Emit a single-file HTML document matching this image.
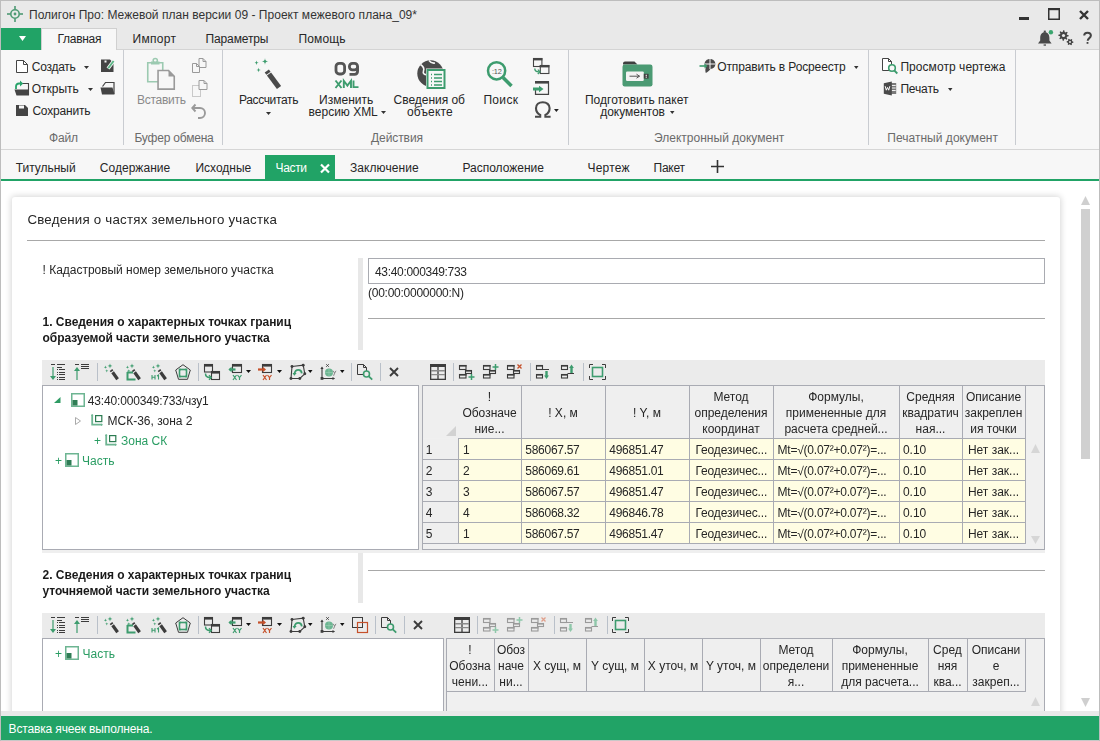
<!DOCTYPE html>
<html><head><meta charset="utf-8"><style>
html,body{margin:0;padding:0;}
body{width:1100px;height:741px;overflow:hidden;position:relative;background:#fff;font-family:"Liberation Sans", sans-serif;}
.t{position:absolute;white-space:nowrap;line-height:1;}
.r{position:absolute;}
svg.r{overflow:visible;}
</style></head><body>

<div class="r" style="left:0px;top:0px;width:1100px;height:49px;background:#e9e9e9;"></div>
<div class="r" style="left:0px;top:49px;width:1100px;height:100px;background:#f7f7f7;"></div>
<div class="r" style="left:0px;top:149px;width:1100px;height:1px;background:#d6d6d6;"></div>
<div class="r" style="left:0px;top:150px;width:1100px;height:29px;background:#f7f7f7;"></div>
<div class="r" style="left:0px;top:179px;width:1100px;height:2px;background:#21a366;"></div>
<div class="r" style="left:0px;top:181px;width:1100px;height:530px;background:#ffffff;"></div>
<div class="r" style="left:0px;top:0px;width:1px;height:741px;background:#bdbdbd;"></div>
<div class="r" style="left:1099px;top:0px;width:1px;height:741px;background:#bdbdbd;"></div>
<div class="r" style="left:0px;top:0px;width:1100px;height:1px;background:#bdbdbd;"></div>
<div class="t" style="left:29px;top:8.84px;font-size:12px;color:#333;letter-spacing:0.024px;">Полигон Про: Межевой план версии 09 - Проект межевого плана_09*</div>
<svg class="r" style="left:7px;top:6px;" width="16" height="16" viewBox="0 0 16 16"><circle cx="8" cy="8" r="4.2" fill="none" stroke="#4f9a74" stroke-width="1.6"/><circle cx="8" cy="8" r="1.4" fill="#4f9a74"/><rect x="7.2" y="0" width="1.6" height="3.6" fill="#4f9a74"/><rect x="7.2" y="12.4" width="1.6" height="3.6" fill="#4f9a74"/><rect x="0" y="7.2" width="3.6" height="1.6" fill="#4f9a74"/><rect x="12.4" y="7.2" width="3.6" height="1.6" fill="#4f9a74"/></svg>
<div class="r" style="left:1019px;top:17px;width:10px;height:3px;background:#333;"></div>
<svg class="r" style="left:1048px;top:8px;" width="12" height="12" viewBox="0 0 12 12"><rect x="0.75" y="1" width="10.5" height="10.25" fill="none" stroke="#333" stroke-width="1.5"/><rect x="0" y="0" width="12" height="2.2" fill="#333"/></svg>
<svg class="r" style="left:1079px;top:10px;" width="10" height="10" viewBox="0 0 10 10"><path d="M1 1L9 9M9 1L1 9" stroke="#333" stroke-width="2.4"/></svg>
<svg class="r" style="left:1037px;top:30px;" width="16" height="16" viewBox="0 0 16 16"><path d="M7.8 2.2c-3.2 0-4.6 2.6-4.6 5.6v2.6L1 13.4h13.6l-2.2-3V7.8c0-3-1.4-5.6-4.6-5.6z" fill="#4a4a4a"/><rect x="6.8" y="0.6" width="2" height="2" fill="#4a4a4a"/><rect x="6.6" y="14.4" width="2.4" height="1.3" fill="#4a4a4a"/><circle cx="13.9" cy="2.3" r="2.2" fill="#3aa56e"/></svg>
<svg class="r" style="left:1058px;top:30px;" width="16" height="16" viewBox="0 0 16 16"><polygon points="10.69,5.24 10.64,6.26 8.89,6.71 8.59,7.35 9.35,8.99 8.60,9.68 7.04,8.75 6.37,8.99 5.76,10.69 4.74,10.64 4.29,8.89 3.65,8.59 2.01,9.35 1.32,8.60 2.25,7.04 2.01,6.37 0.31,5.76 0.36,4.74 2.11,4.29 2.41,3.65 1.65,2.01 2.40,1.32 3.96,2.25 4.63,2.01 5.24,0.31 6.26,0.36 6.71,2.11 7.35,2.41 8.99,1.65 9.68,2.40 8.75,3.96 8.99,4.63" fill="#444"/><circle cx="5.5" cy="5.5" r="1.6" fill="#e9e9e9"/><polygon points="15.39,11.78 15.33,12.66 14.15,13.06 13.80,13.58 13.89,14.83 13.09,15.22 12.16,14.39 11.53,14.35 10.50,15.05 9.76,14.56 10.00,13.33 9.73,12.77 8.61,12.22 8.67,11.34 9.85,10.94 10.20,10.42 10.11,9.17 10.91,8.78 11.84,9.61 12.47,9.65 13.50,8.95 14.24,9.44 14.00,10.67 14.27,11.23" fill="#444"/><circle cx="12" cy="12" r="1.0" fill="#e9e9e9"/></svg>
<svg class="r" style="left:1083px;top:32px;" width="10" height="12" viewBox="0 0 10 12"><path d="M1.2 3.6c0-1.8 1.4-2.8 3.3-2.8s3.4 1 3.4 2.8c0 2.5-3.2 2.6-3.2 5.2" fill="none" stroke="#444" stroke-width="2"/><rect x="3.6" y="10" width="1.8" height="1.8" fill="#444"/></svg>
<div class="r" style="left:1px;top:28px;width:40px;height:22px;background:#21a366;"></div>
<svg class="r" style="left:19px;top:36px;" width="7" height="5" viewBox="0 0 7 5"><path d="M0 0h7l-3.5 5z" fill="#fff"/></svg>
<div class="t" style="left:132.5px;top:33.44px;font-size:12px;color:#262626;letter-spacing:0.309px;">Импорт</div>
<div class="t" style="left:205.5px;top:33.44px;font-size:12px;color:#262626;letter-spacing:-0.121px;">Параметры</div>
<div class="t" style="left:298.5px;top:33.44px;font-size:12px;color:#262626;letter-spacing:0.128px;">Помощь</div>
<div class="r" style="left:41px;top:49px;width:1059px;height:1px;background:#d4d4d4;"></div>
<div class="r" style="left:41px;top:28px;width:76px;height:22px;background:#f7f7f7;border:1px solid #d0d0d0;border-bottom:none;box-sizing:border-box;"></div>
<div class="t" style="left:57.5px;top:33.44px;font-size:12px;color:#262626;letter-spacing:-0.281px;">Главная</div>
<div class="r" style="left:123px;top:50px;width:1px;height:95px;background:#c9ccd1;"></div>
<div class="r" style="left:222px;top:50px;width:1px;height:95px;background:#c9ccd1;"></div>
<div class="r" style="left:568px;top:50px;width:1px;height:95px;background:#c9ccd1;"></div>
<div class="r" style="left:868px;top:50px;width:1px;height:95px;background:#c9ccd1;"></div>
<div class="r" style="left:1015px;top:50px;width:1px;height:95px;background:#c9ccd1;"></div>
<div class="t" style="left:49px;top:131.64px;font-size:12px;color:#6b6b6b;letter-spacing:-0.172px;">Файл</div>
<div class="t" style="left:134.4px;top:131.64px;font-size:12px;color:#6b6b6b;letter-spacing:-0.195px;">Буфер обмена</div>
<div class="t" style="left:371px;top:131.64px;font-size:12px;color:#6b6b6b;letter-spacing:-0.083px;">Действия</div>
<div class="t" style="left:654px;top:131.64px;font-size:12px;color:#6b6b6b;letter-spacing:0.014px;">Электронный документ</div>
<div class="t" style="left:887.3px;top:131.64px;font-size:12px;color:#6b6b6b;letter-spacing:0.023px;">Печатный документ</div>
<div class="t" style="left:31.8px;top:60.84px;font-size:12px;color:#262626;letter-spacing:-0.268px;">Создать</div>
<div class="t" style="left:31.8px;top:82.84px;font-size:12px;color:#262626;letter-spacing:-0.023px;">Открыть</div>
<div class="t" style="left:32.4px;top:104.64px;font-size:12px;color:#262626;letter-spacing:-0.193px;">Сохранить</div>
<svg class="r" style="left:16px;top:60px;" width="12" height="13" viewBox="0 0 12 13"><path d="M0.5 0.5h7l4 4v8h-11z" fill="#fff" stroke="#444"/><path d="M7.5 0.5v4h4" fill="none" stroke="#444"/></svg>
<svg class="r" style="left:84px;top:65.5px;" width="5" height="3" viewBox="0 0 5 3"><path d="M0 0h5l-2.5 3z" fill="#333"/></svg>
<svg class="r" style="left:87.5px;top:87.5px;" width="5" height="3" viewBox="0 0 5 3"><path d="M0 0h5l-2.5 3z" fill="#333"/></svg>
<svg class="r" style="left:101px;top:59px;" width="13" height="14" viewBox="0 0 13 14"><path d="M0 0.5H9L12.5 4V13H0z" fill="#444"/><rect x="3.5" y="1.5" width="2" height="2" fill="#f7f7f7"/><path d="M7 9.5L13 1.5" stroke="#f7f7f7" stroke-width="3.6"/><path d="M7.2 9.2L12.6 2" stroke="#5ab585" stroke-width="1.9"/></svg>
<svg class="r" style="left:14px;top:81px;" width="16" height="15" viewBox="0 0 16 15"><path d="M7.5 2.5H14.5V14" fill="none" stroke="#444" stroke-width="1.1"/><path d="M0.5 8.5H13.5L15 8V14.5H2.5z" fill="#444"/><path d="M2 8V5.5C2 3.5 3.2 2.5 5 2.5H6.5" fill="none" stroke="#27a36a" stroke-width="1.8"/><path d="M6 -0.5l3.2 3-3.2 3z" fill="#27a36a"/></svg>
<svg class="r" style="left:100px;top:81px;" width="15" height="14" viewBox="0 0 15 14"><path d="M2.5 5.5L5.5 1.5H14V13" fill="#f7f7f7" stroke="#444" stroke-width="1.2"/><path d="M0.5 6.5H12.5L14.5 13.5H2z" fill="#444"/></svg>
<svg class="r" style="left:16px;top:105px;" width="12" height="11" viewBox="0 0 12 11"><path d="M0 0h9l3 3v8H0z" fill="#444"/><rect x="3" y="0.5" width="5" height="3" fill="#f7f7f7"/></svg>
<div class="t" style="left:137px;top:93.84px;font-size:12px;color:#8a8a8a;letter-spacing:-0.268px;">Вставить</div>
<svg class="r" style="left:146px;top:58px;" width="30" height="33" viewBox="0 0 30 33"><path d="M1.75 4.75h15v19h-15z" fill="none" stroke="#9ccab1" stroke-width="1.6"/><rect x="5" y="3.5" width="8.5" height="3" fill="#9ccab1"/><circle cx="9.25" cy="2.6" r="2.1" fill="none" stroke="#9ccab1" stroke-width="1.5"/><path d="M12.05 12.55h10.5l5.7 5.7v12.9h-16.2z" fill="#f7f7f7" stroke="#9a9a9a" stroke-width="1.6"/><path d="M22.5 12.5v6h6z" fill="#9a9a9a"/></svg>
<svg class="r" style="left:192px;top:58px;" width="15" height="16" viewBox="0 0 15 16"><path d="M7.0 0.5h4l3 3v6h-7z" fill="#f7f7f7" stroke="#9a9a9a"/><path d="M11.0 0.5v3h3" fill="none" stroke="#9a9a9a"/><path d="M0.5 5.5h4l3 3v6h-7z" fill="#f7f7f7" stroke="#9a9a9a"/><path d="M4.5 5.5v3h3" fill="none" stroke="#9a9a9a"/></svg>
<svg class="r" style="left:192px;top:80px;" width="16" height="17" viewBox="0 0 16 17"><rect x="0.5" y="5.5" width="8" height="11" fill="none" stroke="#9a9a9a" stroke-dasharray="1 1"/><path d="M7.0 0.5h5l3 3v6h-8z" fill="#f7f7f7" stroke="#9a9a9a"/><path d="M12.0 0.5v3h3" fill="none" stroke="#9a9a9a"/></svg>
<svg class="r" style="left:191px;top:103px;" width="16" height="16" viewBox="0 0 16 16"><path d="M4.5 1.5L1.3 5l3.2 3.5" fill="none" stroke="#9a9a9a" stroke-width="1.9"/><path d="M1.8 5h7.2a5 5 0 0 1 0 10H7" fill="none" stroke="#9a9a9a" stroke-width="1.9"/></svg>
<div class="t" style="left:238.9px;top:93.84px;font-size:12px;color:#262626;letter-spacing:-0.336px;">Рассчитать</div>
<svg class="r" style="left:266px;top:111.5px;" width="5" height="3" viewBox="0 0 5 3"><path d="M0 0h5l-2.5 3z" fill="#333"/></svg>
<svg class="r" style="left:254px;top:58px;" width="28" height="32" viewBox="0 0 28 32"><path d="M2.5 2.5999999999999996Q2.5 4.8 4.7 4.8Q2.5 4.8 2.5 7.0Q2.5 4.8 0.2999999999999998 4.8Q2.5 4.8 2.5 2.5999999999999996z" fill="#3d9c6e"/><path d="M11 0.10000000000000009Q11 3.5 14.4 3.5Q11 3.5 11 6.9Q11 3.5 7.6 3.5Q11 3.5 11 0.10000000000000009z" fill="#3d9c6e"/><path d="M4.6 9.8Q4.6 12 6.8 12Q4.6 12 4.6 14.2Q4.6 12 2.3999999999999995 12Q4.6 12 4.6 9.8z" fill="#3d9c6e"/><path d="M15 16L25 29.5" stroke="#4a4a4a" stroke-width="5.2"/><path d="M12.8 13L14.5 15.3" stroke="#4a4a4a" stroke-width="5.2"/></svg>
<div class="t" style="left:319.1px;top:93.64px;font-size:12px;color:#262626;letter-spacing:0.008px;">Изменить</div>
<div class="t" style="left:308.6px;top:106.34px;font-size:12px;color:#262626;letter-spacing:-0.012px;">версию XML</div>
<svg class="r" style="left:381.4px;top:111.3px;" width="5" height="3" viewBox="0 0 5 3"><path d="M0 0h5l-2.5 3z" fill="#333"/></svg>
<svg class="r" style="left:334px;top:62px;" width="26" height="27" viewBox="0 0 26 27"><rect x="2" y="1.4" width="8.6" height="10.6" rx="3.2" fill="none" stroke="#555" stroke-width="2.8"/><rect x="15.4" y="1.4" width="8.2" height="6.4" rx="3" fill="none" stroke="#555" stroke-width="2.8"/><path d="M23.6 4.5v4.6c0 2-1 3.3-3.2 3.3H15.5" fill="none" stroke="#555" stroke-width="2.8"/><path d="M1.5 18.5l6 7.5M7.5 18.5l-6 7.5" stroke="#3d9c6e" stroke-width="1.9"/><path d="M9.8 26v-7.2l3.6 4.8 3.6-4.8V26" fill="none" stroke="#3d9c6e" stroke-width="1.9"/><path d="M19.5 18.5v6.6h5" fill="none" stroke="#3d9c6e" stroke-width="1.9"/></svg>
<div class="t" style="left:393.6px;top:94.34px;font-size:12px;color:#262626;letter-spacing:-0.030px;">Сведения об</div>
<div class="t" style="left:407px;top:106.44px;font-size:12px;color:#262626;letter-spacing:0.142px;">объекте</div>
<svg class="r" style="left:417px;top:59px;" width="29" height="30" viewBox="0 0 29 30"><circle cx="13.5" cy="14.5" r="13.2" fill="#4a4a4a"/><path d="M3.5 5.5c3 2 4 4 3 6.5s1 4 4 3.5M12 1.5c1.5 2 3.5 3 6 2.5" fill="none" stroke="#f7f7f7" stroke-width="1.6"/><rect x="9" y="9.5" width="20" height="21" fill="#f7f7f7"/><rect x="10.5" y="11" width="17" height="18" fill="#f7f7f7" stroke="#3d9c6e" stroke-width="2"/><path d="M14 15.5h1M17 15.5h8M14 19h1M17 19h8M14 22.5h1M17 22.5h8M14 26h1M17 26h8" stroke="#3d9c6e" stroke-width="1.6"/></svg>
<div class="t" style="left:483.4px;top:94.34px;font-size:12px;color:#262626;letter-spacing:0.334px;">Поиск</div>
<svg class="r" style="left:486px;top:61px;" width="27" height="27" viewBox="0 0 27 27"><circle cx="10.6" cy="9.8" r="8.6" fill="none" stroke="#3d9c6e" stroke-width="2.5"/><path d="M17 16.5l8.5 8.5" stroke="#3d9c6e" stroke-width="3.6"/><text x="10.8" y="12.6" text-anchor="middle" font-family="Liberation Sans" font-size="7.4" fill="#555" letter-spacing="-0.3">:12</text></svg>
<svg class="r" style="left:533px;top:58px;" width="17" height="17" viewBox="0 0 17 17"><rect x="0.5" y="0.5" width="8.4" height="8" fill="none" stroke="#444" stroke-width="1.1"/><rect x="0" y="0" width="9.4" height="2.4" fill="#444"/><rect x="7.3" y="7.5" width="8.6" height="8" fill="#f7f7f7" stroke="#444" stroke-width="1.1"/><rect x="6.8" y="7" width="9.6" height="2.4" fill="#444"/><path d="M1.8 10.5c0 2.5 1.2 3.3 4 3.3" fill="none" stroke="#3d9c6e" stroke-width="1.4"/><path d="M4.8 11.6l2.2 2.2-2.2 2.2" fill="none" stroke="#3d9c6e" stroke-width="1.3"/></svg>
<svg class="r" style="left:533px;top:81px;" width="17" height="15" viewBox="0 0 17 15"><path d="M2.5 8.5V13.4H15.5V0.5" fill="none" stroke="#444" stroke-width="1.2"/><rect x="2" y="0" width="14" height="2.6" fill="#444"/><path d="M0 8h6.5" stroke="#3d9c6e" stroke-width="3"/><path d="M6 4.8l4.5 3.2-4.5 3.2z" fill="#3d9c6e"/></svg>
<svg class="r" style="left:534px;top:101px;" width="18" height="18" viewBox="0 0 18 18"><path d="M1 15.8h5.2v-1.9C3.4 12.4 2 10 2 7.2 2 3.6 4.8 1.2 8.8 1.2s6.8 2.4 6.8 6c0 2.8-1.4 5.2-4.2 6.7v1.9H16.6" fill="none" stroke="#4a4a4a" stroke-width="2.1"/></svg>
<svg class="r" style="left:554.2px;top:109.2px;" width="4.8" height="3" viewBox="0 0 4.8 3"><path d="M0 0h4.8l-2.4 3z" fill="#222"/></svg>
<div class="t" style="left:584.9px;top:93.64px;font-size:12px;color:#262626;letter-spacing:0.032px;">Подготовить пакет</div>
<div class="t" style="left:600.2px;top:105.64px;font-size:12px;color:#262626;letter-spacing:-0.010px;">документов</div>
<svg class="r" style="left:669.5px;top:111.2px;" width="4.5" height="3" viewBox="0 0 4.5 3"><path d="M0 0h4.5l-2.25 3z" fill="#333"/></svg>
<svg class="r" style="left:622px;top:61px;" width="31" height="26" viewBox="0 0 31 26"><path d="M1 2.5a2 2 0 0 1 2-2h9.5l3 3H1z" fill="#3f3f3f"/><rect x="0.5" y="3.5" width="30" height="22" rx="2.2" fill="#4b9a73"/><rect x="4" y="10.4" width="17.8" height="9.6" rx="1.2" fill="#f3f3f3"/><rect x="21.8" y="12.8" width="4.8" height="4.8" fill="#3f3f3f"/><rect x="23.6" y="13.8" width="1.4" height="1" fill="#f3f3f3"/><rect x="23.6" y="15.6" width="1.4" height="1" fill="#f3f3f3"/><path d="M7.5 15.2h10M14.5 13.2l3 2-3 2" stroke="#555" stroke-width="1" fill="none"/></svg>
<div class="t" style="left:717.3px;top:60.84px;font-size:12px;color:#262626;letter-spacing:-0.130px;">Отправить в Росреестр</div>
<svg class="r" style="left:854px;top:65.5px;" width="4.5" height="3" viewBox="0 0 4.5 3"><path d="M0 0h4.5l-2.25 3z" fill="#333"/></svg>
<svg class="r" style="left:699px;top:58px;" width="17" height="16" viewBox="0 0 17 16"><path d="M11 1C7.8 1 5.6 3.2 5.6 6.2c0 1.6 0.4 2.4 1.2 3.4-0.6 1.6-0.6 3.6 0 5.4 1.8-1 3.6-2.4 4.6-4 3-0.2 5-2.2 5-4.8C16.4 3.2 14.2 1 11 1z" fill="#4a4a4a"/><path d="M11 1v10M5.8 6h10.6" stroke="#f7f7f7" stroke-width="1"/><rect x="6.5" y="5" width="4" height="4" fill="#f7f7f7" opacity=".0"/><path d="M0.5 8h6" stroke="#3d9c6e" stroke-width="1.6"/><path d="M5.5 5.5l3 2.5-3 2.5z" fill="#3d9c6e"/></svg>
<div class="t" style="left:900.4px;top:60.74px;font-size:12px;color:#262626;letter-spacing:0.061px;">Просмотр чертежа</div>
<div class="t" style="left:900.4px;top:82.54px;font-size:12px;color:#262626;letter-spacing:-0.142px;">Печать</div>
<svg class="r" style="left:948.4px;top:87.5px;" width="4.5" height="3" viewBox="0 0 4.5 3"><path d="M0 0h4.5l-2.25 3z" fill="#333"/></svg>
<svg class="r" style="left:882px;top:58px;" width="16" height="16" viewBox="0 0 16 16"><path d="M0.5 0.5h6l3 3v9h-9z" fill="#fff" stroke="#444"/><path d="M6.5 0.5v3h3" fill="none" stroke="#444"/><circle cx="10" cy="10" r="3.3" fill="#f7f7f7" stroke="#3d9c6e" stroke-width="1.6"/><path d="M12.3 12.5l3 3" stroke="#3d9c6e" stroke-width="1.8"/></svg>
<svg class="r" style="left:883px;top:81px;" width="14" height="15" viewBox="0 0 14 15"><rect x="8" y="2" width="5.2" height="11" fill="#7a7a7a"/><path d="M8.5 4.5h4.2M8.5 7h4.2M8.5 9.5h4.2" stroke="#f0f0f0" stroke-width="1"/><path d="M0.8 2.2L8.8 0.4V14.6L0.8 12.8z" fill="#4a4a4a"/><path d="M2.2 5.2l1.1 4 1.2-2.8 1.2 2.8 1.1-4" fill="none" stroke="#fff" stroke-width="1"/></svg>
<div class="t" style="left:15.7px;top:162.24px;font-size:12px;color:#262626;letter-spacing:-0.012px;">Титульный</div>
<div class="t" style="left:99.8px;top:162.24px;font-size:12px;color:#262626;letter-spacing:0.029px;">Содержание</div>
<div class="t" style="left:195.4px;top:162.24px;font-size:12px;color:#262626;letter-spacing:0.010px;">Исходные</div>
<div class="r" style="left:265px;top:155px;width:70px;height:24px;background:#21a366;"></div>
<div class="t" style="left:275.5px;top:162.24px;font-size:12px;color:#fff;letter-spacing:-0.344px;">Части</div>
<svg class="r" style="left:320px;top:164px;" width="10" height="9" viewBox="0 0 10 9"><path d="M1 0.5l8 8M9 0.5l-8 8" stroke="#fff" stroke-width="2.2"/></svg>
<div class="t" style="left:350px;top:162.24px;font-size:12px;color:#262626;letter-spacing:0.068px;">Заключение</div>
<div class="t" style="left:462.4px;top:162.24px;font-size:12px;color:#262626;letter-spacing:0.002px;">Расположение</div>
<div class="t" style="left:587.5px;top:162.24px;font-size:12px;color:#262626;letter-spacing:0.197px;">Чертеж</div>
<div class="t" style="left:653.5px;top:162.24px;font-size:12px;color:#262626;letter-spacing:-0.242px;">Пакет</div>
<svg class="r" style="left:711px;top:160px;" width="13" height="13" viewBox="0 0 13 13"><path d="M6.5 0v13M0 6.5h13" stroke="#333" stroke-width="1.6"/></svg>
<div class="r" style="left:0;top:181px;width:1100px;height:530px;overflow:hidden;will-change:transform;"><div class="r" style="left:0;top:-181px;width:1100px;height:741px;">
<div class="r" style="left:12px;top:197px;width:1048px;height:600px;background:#fff;border-radius:3px;box-shadow:0 0 6px 1px rgba(0,0,0,0.16);"></div>
<div class="t" style="left:27.4px;top:212.74px;font-size:13.3px;color:#262626;letter-spacing:0.221px;">Сведения о частях земельного участка</div>
<div class="r" style="left:27px;top:240px;width:1018px;height:1px;background:#a8a8a8;"></div>
<div class="t" style="left:42.6px;top:263.84px;font-size:12px;color:#262626;letter-spacing:-0.027px;">! Кадастровый номер земельного участка</div>
<div class="r" style="left:358px;top:258px;width:5px;height:92px;background:#e8e8e8;"></div>
<div class="r" style="left:368px;top:258px;width:677px;height:26px;background:#fff;border:1px solid #a9abb1;box-sizing:border-box;"></div>
<div class="t" style="left:375px;top:265.84px;font-size:12px;color:#262626;letter-spacing:-0.318px;">43:40:000349:733</div>
<div class="t" style="left:368px;top:286.84px;font-size:12px;color:#262626;letter-spacing:-0.255px;">(00:00:0000000:N)</div>
<div class="r" style="left:368px;top:318px;width:677px;height:1px;background:#a8a8a8;"></div>
<div class="t" style="left:42.6px;top:316.14px;font-size:12px;color:#1a1a1a;font-weight:700;letter-spacing:-0.039px;">1. Сведения о характерных точках границ</div>
<div class="t" style="left:42.6px;top:331.84px;font-size:12px;color:#1a1a1a;font-weight:700;letter-spacing:-0.081px;">образуемой части земельного участка</div>
<svg class="r" style="left:1081px;top:196px;" width="9" height="9" viewBox="0 0 9 9"><path d="M4.5 0L9 9H0z" fill="#cfcfcf"/></svg>
<div class="r" style="left:1081px;top:209px;width:9px;height:250px;background:#d0d0d0;"></div>
<svg class="r" style="left:1081px;top:698px;" width="9" height="9" viewBox="0 0 9 9"><path d="M0 0h9L4.5 9z" fill="#cfcfcf"/></svg>
<div class="r" style="left:42px;top:360px;width:1003px;height:25px;background:#ebebeb;"></div>
<svg class="r" style="left:50px;top:364px;" width="16" height="16" viewBox="0 0 16 16"><path d="M1 0.5h4M7 0.5h8" stroke="#3c3c3c" stroke-width="1"/><path d="M7 3.5h5M9 5.5h6M9 8.5h6M9 10.5h6M9 13.5h6M9 15.5h6" stroke="#3c3c3c" stroke-width="1"/><path d="M7 5.5h1M7 8.5h1M7 10.5h1M7 13.5h1M7 15.5h1" stroke="#3c3c3c" stroke-width="1"/><path d="M3 3v10" stroke="#3d9c6e" stroke-width="1.6" opacity=".75"/><path d="M0 12h6l-3 4z" fill="#3d9c6e"/></svg>
<svg class="r" style="left:74px;top:364px;" width="16" height="16" viewBox="0 0 16 16"><path d="M1 0.5h4M7 0.5h8M7 2.5h8M7 4.5h8" stroke="#3c3c3c" stroke-width="1"/><path d="M3 6v10" stroke="#3d9c6e" stroke-width="1.6" opacity=".75"/><path d="M0 7h6l-3-4z" fill="#3d9c6e"/></svg>
<div class="r" style="left:97px;top:363px;width:1px;height:18px;background:#b9c0c9;"></div>
<svg class="r" style="left:104px;top:364px;" width="16" height="16" viewBox="0 0 16 16"><path d="M1.5 1.6Q1.5 3.2 3.1 3.2Q1.5 3.2 1.5 4.800000000000001Q1.5 3.2 -0.10000000000000009 3.2Q1.5 3.2 1.5 1.6z" fill="#3d9c6e"/><path d="M6 -0.3999999999999999Q6 2 8.4 2Q6 2 6 4.4Q6 2 3.6 2Q6 2 6 -0.3999999999999999z" fill="#3d9c6e"/><path d="M2.8 5.199999999999999Q2.8 6.8 4.4 6.8Q2.8 6.8 2.8 8.4Q2.8 6.8 1.1999999999999997 6.8Q2.8 6.8 2.8 5.199999999999999z" fill="#3d9c6e"/><path d="M8.6 8.2L13.6 15.2" stroke="#3c3c3c" stroke-width="3.2"/><path d="M7 6L8 7.4" stroke="#3c3c3c" stroke-width="3.2"/></svg>
<svg class="r" style="left:126px;top:364px;" width="16" height="16" viewBox="0 0 16 16"><path d="M1.5 1.6Q1.5 3.2 3.1 3.2Q1.5 3.2 1.5 4.800000000000001Q1.5 3.2 -0.10000000000000009 3.2Q1.5 3.2 1.5 1.6z" fill="#3d9c6e"/><path d="M6 -0.3999999999999999Q6 2 8.4 2Q6 2 6 4.4Q6 2 3.6 2Q6 2 6 -0.3999999999999999z" fill="#3d9c6e"/><path d="M2.8 5.199999999999999Q2.8 6.8 4.4 6.8Q2.8 6.8 2.8 8.4Q2.8 6.8 1.1999999999999997 6.8Q2.8 6.8 2.8 5.199999999999999z" fill="#3d9c6e"/><path d="M8.6 8.2L13.6 15.2" stroke="#3c3c3c" stroke-width="3.2"/><path d="M7 6L8 7.4" stroke="#3c3c3c" stroke-width="3.2"/><path d="M1 8.5h6M1.5 8v7.5h8" fill="none" stroke="#3d9c6e" stroke-width="2"/></svg>
<svg class="r" style="left:152px;top:364px;" width="16" height="16" viewBox="0 0 16 16"><path d="M1.5 1.6Q1.5 3.2 3.1 3.2Q1.5 3.2 1.5 4.800000000000001Q1.5 3.2 -0.10000000000000009 3.2Q1.5 3.2 1.5 1.6z" fill="#3d9c6e"/><path d="M6 -0.3999999999999999Q6 2 8.4 2Q6 2 6 4.4Q6 2 3.6 2Q6 2 6 -0.3999999999999999z" fill="#3d9c6e"/><path d="M2.8 5.199999999999999Q2.8 6.8 4.4 6.8Q2.8 6.8 2.8 8.4Q2.8 6.8 1.1999999999999997 6.8Q2.8 6.8 2.8 5.199999999999999z" fill="#3d9c6e"/><path d="M8.6 8.2L13.6 15.2" stroke="#3c3c3c" stroke-width="3.2"/><path d="M7 6L8 7.4" stroke="#3c3c3c" stroke-width="3.2"/><path d="M0 11v4.5M3 11v4.5M0 13.2h3M5 12l1.5-1v4.5" fill="none" stroke="#3d9c6e" stroke-width="1.1"/></svg>
<svg class="r" style="left:175px;top:364px;" width="16" height="16" viewBox="0 0 16 16"><path d="M8 0.7L15.3 6 12.5 15.3H3.5L0.7 6z" fill="none" stroke="#3c3c3c" stroke-width="1"/><rect x="4.5" y="5.5" width="7" height="7" fill="none" stroke="#3d9c6e" stroke-width="1.6"/><path d="M4.5 5.5h1M10.5 5.5h1M4.5 12.5h1M10.5 12.5h1" stroke="#3d9c6e" stroke-width="2.2"/></svg>
<div class="r" style="left:198px;top:363px;width:1px;height:18px;background:#b9c0c9;"></div>
<svg class="r" style="left:204px;top:364px;" width="16" height="16" viewBox="0 0 16 16"><rect x="0.5" y="0.5" width="8" height="7.5" fill="none" stroke="#3c3c3c" stroke-width="1.1"/><rect x="0" y="0" width="9" height="2.6" fill="#3c3c3c"/><rect x="7.5" y="7.5" width="8" height="8" fill="#ebebeb" stroke="#3c3c3c" stroke-width="1.1"/><rect x="7" y="7" width="9" height="2.6" fill="#3c3c3c"/><path d="M1.5 9.5c0 3 1.5 4 4.5 4" fill="none" stroke="#3d9c6e" stroke-width="1.5"/><path d="M5 11.3l2.2 2.2-2.2 2.2" fill="none" stroke="#3d9c6e" stroke-width="1.4"/></svg>
<svg class="r" style="left:228px;top:364px;" width="16" height="16" viewBox="0 0 16 16"><rect x="4.5" y="0.5" width="9" height="8" fill="none" stroke="#3c3c3c" stroke-width="1.1"/><rect x="4" y="0" width="10" height="2.6" fill="#3c3c3c"/><path d="M1.5 5.5h6" stroke="#3d9c6e" stroke-width="2.2"/><path d="M3.6 2.8L0.4 5.5 3.6 8.2z" fill="#3d9c6e"/><path d="M5 11l3.5 5M8.5 11L5 16M9.5 11l2 2.5 2-2.5M11.5 13.5v2.5" fill="none" stroke="#3d9c6e" stroke-width="1.2"/></svg>
<svg class="r" style="left:246px;top:370px;" width="5" height="3" viewBox="0 0 5 3"><path d="M0 0h5l-2.5 3z" fill="#111"/></svg>
<svg class="r" style="left:258px;top:364px;" width="16" height="16" viewBox="0 0 16 16"><rect x="4.5" y="0.5" width="9" height="8" fill="none" stroke="#3c3c3c" stroke-width="1.1"/><rect x="4" y="0" width="10" height="2.6" fill="#3c3c3c"/><path d="M0 5.5h5.5" stroke="#c5502a" stroke-width="2.2"/><path d="M4.8 2.8l3.2 2.7-3.2 2.7z" fill="#c5502a"/><path d="M5 11l3.5 5M8.5 11L5 16M9.5 11l2 2.5 2-2.5M11.5 13.5v2.5" fill="none" stroke="#c5502a" stroke-width="1.2"/></svg>
<svg class="r" style="left:277px;top:370px;" width="5" height="3" viewBox="0 0 5 3"><path d="M0 0h5l-2.5 3z" fill="#111"/></svg>
<svg class="r" style="left:290px;top:364px;" width="16" height="16" viewBox="0 0 16 16"><path d="M2 2.5 L13.2 1.2 L14.8 9.8 L9.8 14.5 L1 14.5z" fill="none" stroke="#3c3c3c" stroke-width="1.1"/><circle cx="2" cy="2.5" r="1.45" fill="#3c3c3c"/><circle cx="13.2" cy="1.2" r="1.45" fill="#3c3c3c"/><circle cx="14.8" cy="9.8" r="1.45" fill="#3c3c3c"/><circle cx="9.8" cy="14.5" r="1.45" fill="#3c3c3c"/><circle cx="1" cy="14.5" r="1.45" fill="#3c3c3c"/><path d="M4.5 9.5c0.5-2.5 2-3.6 3.8-3.6s3.3 1.4 3.5 3.4" fill="none" stroke="#3d9c6e" stroke-width="1.7"/><path d="M2.5 9h4.2l-2.4 2.8z" fill="#3d9c6e"/></svg>
<svg class="r" style="left:308px;top:370px;" width="4.5" height="3" viewBox="0 0 4.5 3"><path d="M0 0h4.5l-2.25 3z" fill="#111"/></svg>
<svg class="r" style="left:320px;top:364px;" width="17" height="16" viewBox="0 0 17 16"><path d="M2 3.5V14.5H13" fill="none" stroke="#3c3c3c" stroke-width="1.1"/><path d="M0.4 5L2 2.5 3.6 5z" fill="#3c3c3c"/><path d="M12.5 13l2.6 1.5-2.6 1.5z" fill="#3c3c3c"/><rect x="0.6" y="13" width="2.8" height="2.8" fill="#3c3c3c"/><circle cx="9" cy="8.5" r="4" fill="#6db592"/><path d="M5.2 8.5h7.6M9 4.6v7.8" stroke="#9fd0b5" stroke-width=".6"/><path d="M6.2 0.2l2.6 2.6M8.8 0.2L6.2 2.8" stroke="#3c3c3c" stroke-width=".9"/><path d="M13.2 6.8l1.4 2.4 1.4-2.4M14.6 9.2l-1 2.6" fill="none" stroke="#777" stroke-width=".9"/></svg>
<svg class="r" style="left:339.5px;top:370px;" width="4.5" height="3" viewBox="0 0 4.5 3"><path d="M0 0h4.5l-2.25 3z" fill="#111"/></svg>
<div class="r" style="left:351px;top:363px;width:1px;height:18px;background:#b9c0c9;"></div>
<svg class="r" style="left:357px;top:364px;" width="16" height="16" viewBox="0 0 16 16"><path d="M0.5 0.5h6l3 3v7h-9z" fill="none" stroke="#3c3c3c"/><path d="M6.5 0.5v3h3" fill="none" stroke="#3c3c3c"/><circle cx="9.5" cy="10" r="3" fill="#ebebeb" stroke="#3d9c6e" stroke-width="1.6"/><path d="M11.6 12.2l3.6 3.4" stroke="#3d9c6e" stroke-width="1.8"/></svg>
<div class="r" style="left:380px;top:363px;width:1px;height:18px;background:#b9c0c9;"></div>
<svg class="r" style="left:389px;top:367px;" width="10" height="10" viewBox="0 0 10 10"><path d="M1 1L9 9M9 1L1 9" stroke="#3c3c3c" stroke-width="1.9"/></svg>
<svg class="r" style="left:430px;top:364px;" width="16" height="16" viewBox="0 0 16 16"><rect x="0.65" y="0.65" width="14.7" height="14.7" fill="none" stroke="#3c3c3c" stroke-width="1.3"/><rect x="0" y="0" width="16" height="3" fill="#3c3c3c"/><path d="M8 1v14" stroke="#3c3c3c" stroke-width="1.3"/><path d="M1 6.8h14M1 10.6h14" stroke="#8a8a8a" stroke-width="1.4"/></svg>
<div class="r" style="left:453px;top:363px;width:1px;height:18px;background:#b9c0c9;"></div>
<svg class="r" style="left:459px;top:364px;" width="16" height="16" viewBox="0 0 16 16"><rect x="0.5" y="1.5" width="6.5" height="4" fill="none" stroke="#3c3c3c" stroke-width="1.1"/><rect x="0" y="1" width="7.5" height="1.6" fill="#3c3c3c"/><rect x="6.5" y="6.5" width="6" height="3" fill="none" stroke="#3c3c3c" stroke-width="1.1"/><rect x="6" y="6" width="7" height="1.6" fill="#3c3c3c"/><rect x="0.5" y="10.5" width="6.5" height="3.5" fill="none" stroke="#3c3c3c" stroke-width="1.1"/><rect x="0" y="10" width="7.5" height="1.6" fill="#3c3c3c"/><path d="M12.5 10v6M9.5 13h6" stroke="#3d9c6e" stroke-width="1.5"/></svg>
<svg class="r" style="left:483px;top:364px;" width="16" height="16" viewBox="0 0 16 16"><rect x="0.5" y="1.5" width="6.5" height="4" fill="none" stroke="#3c3c3c" stroke-width="1.1"/><rect x="0" y="1" width="7.5" height="1.6" fill="#3c3c3c"/><rect x="6.5" y="6.5" width="6" height="3" fill="none" stroke="#3c3c3c" stroke-width="1.1"/><rect x="6" y="6" width="7" height="1.6" fill="#3c3c3c"/><rect x="0.5" y="10.5" width="6.5" height="3.5" fill="none" stroke="#3c3c3c" stroke-width="1.1"/><rect x="0" y="10" width="7.5" height="1.6" fill="#3c3c3c"/><path d="M12.5 0v6M9.5 3h6" stroke="#3d9c6e" stroke-width="1.5"/></svg>
<svg class="r" style="left:507px;top:364px;" width="16" height="16" viewBox="0 0 16 16"><rect x="0.5" y="1.5" width="6.5" height="4" fill="none" stroke="#3c3c3c" stroke-width="1.1"/><rect x="0" y="1" width="7.5" height="1.6" fill="#3c3c3c"/><rect x="6.5" y="6.5" width="6" height="3" fill="none" stroke="#3c3c3c" stroke-width="1.1"/><rect x="6" y="6" width="7" height="1.6" fill="#3c3c3c"/><rect x="0.5" y="10.5" width="6.5" height="3.5" fill="none" stroke="#3c3c3c" stroke-width="1.1"/><rect x="0" y="10" width="7.5" height="1.6" fill="#3c3c3c"/><path d="M10.5 0.5l4 4M14.5 0.5l-4 4" stroke="#c5502a" stroke-width="1.3"/></svg>
<div class="r" style="left:530px;top:363px;width:1px;height:18px;background:#b9c0c9;"></div>
<svg class="r" style="left:536px;top:364px;" width="16" height="16" viewBox="0 0 16 16"><rect x="0.5" y="1.5" width="6" height="4" fill="none" stroke="#3c3c3c" stroke-width="1.1"/><rect x="0" y="1" width="7" height="1.6" fill="#3c3c3c"/><rect x="0.5" y="10.5" width="6" height="3.5" fill="none" stroke="#3c3c3c" stroke-width="1.1"/><rect x="0" y="10" width="7" height="1.6" fill="#3c3c3c"/><path d="M6.5 5.5h6.5" stroke="#3c3c3c" stroke-width="1"/><path d="M10.5 7v5" stroke="#3d9c6e" stroke-width="2.4"/><path d="M8.1 11.5h4.8L10.5 15z" fill="#3d9c6e"/></svg>
<svg class="r" style="left:561px;top:364px;" width="16" height="16" viewBox="0 0 16 16"><rect x="0.5" y="1.5" width="6" height="4" fill="none" stroke="#3c3c3c" stroke-width="1.1"/><rect x="0" y="1" width="7" height="1.6" fill="#3c3c3c"/><rect x="0.5" y="10.5" width="6" height="3.5" fill="none" stroke="#3c3c3c" stroke-width="1.1"/><rect x="0" y="10" width="7" height="1.6" fill="#3c3c3c"/><path d="M6.5 9.5h6.5" stroke="#3c3c3c" stroke-width="1"/><path d="M10.5 3.5v5.5" stroke="#3d9c6e" stroke-width="2.4"/><path d="M8.1 4h4.8L10.5 0.5z" fill="#3d9c6e"/></svg>
<div class="r" style="left:583px;top:363px;width:1px;height:18px;background:#b9c0c9;"></div>
<svg class="r" style="left:589px;top:364px;" width="17" height="16" viewBox="0 0 17 16"><path d="M0.5 4V0.5H4M13 0.5h3.5V4M16.5 12v3.5H13M4 15.5H0.5V12" fill="none" stroke="#3c3c3c" stroke-width="1"/><rect x="3.5" y="3.5" width="10" height="9" fill="none" stroke="#3d9c6e" stroke-width="1.6"/></svg>
<div class="r" style="left:42px;top:385px;width:377px;height:165px;background:#fff;border:1px solid #a9abb3;box-sizing:border-box;"></div>
<div class="r" style="left:419px;top:385px;width:3px;height:165px;background:#ebebeb;"></div>
<svg class="r" style="left:54px;top:397px;" width="7" height="6" viewBox="0 0 7 6"><path d="M6.5 0v6H0z" fill="#2e9b63"/></svg>
<svg class="r" style="left:71px;top:393px;" width="14" height="14" viewBox="0 0 14 14"><rect x="0.75" y="0.75" width="12.5" height="12.5" fill="none" stroke="#6db592" stroke-width="1.5"/><rect x="1.5" y="7" width="5" height="5.5" fill="#2f7d55"/></svg>
<div class="t" style="left:87.8px;top:394.84px;font-size:12px;color:#262626;letter-spacing:-0.170px;">43:40:000349:733/чзу1</div>
<svg class="r" style="left:75px;top:417px;" width="6" height="8" viewBox="0 0 6 8"><path d="M0.5 0.5L5.5 4 0.5 7.5z" fill="none" stroke="#aaa"/></svg>
<svg class="r" style="left:91px;top:413.5px;" width="13" height="13" viewBox="0 0 13 13"><path d="M1.2 0.5v10.2h10" fill="none" stroke="#6db592" stroke-width="1.8"/><path d="M0 2l1.2-2 1.2 2M10 9.5l2 1.2-2 1.2" fill="#6db592" stroke="none"/><rect x="4.6" y="1.6" width="6.2" height="6" fill="none" stroke="#2b7b50" stroke-width="1.2"/></svg>
<div class="t" style="left:107.5px;top:415.34px;font-size:12px;color:#262626;">МСК-36, зона 2</div>
<div class="t" style="left:94px;top:435.34px;font-size:12px;color:#2a9d63;">+</div>
<svg class="r" style="left:105px;top:433.5px;" width="13" height="13" viewBox="0 0 13 13"><path d="M1.2 0.5v10.2h10" fill="none" stroke="#6db592" stroke-width="1.8"/><path d="M0 2l1.2-2 1.2 2M10 9.5l2 1.2-2 1.2" fill="#6db592" stroke="none"/><rect x="4.6" y="1.6" width="6.2" height="6" fill="none" stroke="#2b7b50" stroke-width="1.2"/></svg>
<div class="t" style="left:121px;top:435.34px;font-size:12px;color:#2a9d63;">Зона СК</div>
<div class="t" style="left:55px;top:454.54px;font-size:12px;color:#2a9d63;">+</div>
<svg class="r" style="left:65px;top:453px;" width="14" height="14" viewBox="0 0 14 14"><rect x="0.75" y="0.75" width="12.5" height="12.5" fill="none" stroke="#6db592" stroke-width="1.5"/><rect x="1.5" y="7" width="5" height="5.5" fill="#2f7d55"/></svg>
<div class="t" style="left:82px;top:454.54px;font-size:12px;color:#2a9d63;">Часть</div>
<div class="r" style="left:422px;top:385px;width:623px;height:165px;background:#f0f0f0;border:1px solid #a9abb3;box-sizing:border-box;"></div>
<div class="r" style="left:423px;top:386px;width:602px;height:52px;background:#efefef;"></div>
<div class="r" style="left:521px;top:386px;width:1px;height:158px;background:#a9abb3;"></div>
<div class="r" style="left:605px;top:386px;width:1px;height:158px;background:#a9abb3;"></div>
<div class="r" style="left:689px;top:386px;width:1px;height:158px;background:#a9abb3;"></div>
<div class="r" style="left:773px;top:386px;width:1px;height:158px;background:#a9abb3;"></div>
<div class="r" style="left:899px;top:386px;width:1px;height:158px;background:#a9abb3;"></div>
<div class="r" style="left:962px;top:386px;width:1px;height:158px;background:#a9abb3;"></div>
<div class="r" style="left:1025px;top:386px;width:1px;height:158px;background:#a9abb3;"></div>
<div class="r" style="left:458px;top:438px;width:567px;height:1px;background:#a9abb3;"></div>
<svg class="r" style="left:446px;top:426px;" width="10" height="10" viewBox="0 0 10 10"><path d="M10 0v10H0z" fill="#d2d2d2"/></svg>
<div class="t" style="left:189.5px;width:600px;text-align:center;top:391.34px;font-size:12px;color:#262626;">!</div>
<div class="t" style="left:189.5px;width:600px;text-align:center;top:407.34px;font-size:12px;color:#262626;">Обозначе</div>
<div class="t" style="left:189.5px;width:600px;text-align:center;top:423.34px;font-size:12px;color:#262626;">ние...</div>
<div class="t" style="left:263.0px;width:600px;text-align:center;top:407.34px;font-size:12px;color:#262626;">! X, м</div>
<div class="t" style="left:347.0px;width:600px;text-align:center;top:407.34px;font-size:12px;color:#262626;">! Y, м</div>
<div class="t" style="left:431.0px;width:600px;text-align:center;top:391.34px;font-size:12px;color:#262626;">Метод</div>
<div class="t" style="left:431.0px;width:600px;text-align:center;top:407.34px;font-size:12px;color:#262626;">определения</div>
<div class="t" style="left:431.0px;width:600px;text-align:center;top:423.34px;font-size:12px;color:#262626;">координат</div>
<div class="t" style="left:536.0px;width:600px;text-align:center;top:391.34px;font-size:12px;color:#262626;">Формулы,</div>
<div class="t" style="left:536.0px;width:600px;text-align:center;top:407.34px;font-size:12px;color:#262626;">примененные для</div>
<div class="t" style="left:536.0px;width:600px;text-align:center;top:423.34px;font-size:12px;color:#262626;">расчета средней...</div>
<div class="t" style="left:630.5px;width:600px;text-align:center;top:391.34px;font-size:12px;color:#262626;">Средняя</div>
<div class="t" style="left:630.5px;width:600px;text-align:center;top:407.34px;font-size:12px;color:#262626;">квадратич</div>
<div class="t" style="left:630.5px;width:600px;text-align:center;top:423.34px;font-size:12px;color:#262626;">ная...</div>
<div class="t" style="left:693.5px;width:600px;text-align:center;top:391.34px;font-size:12px;color:#262626;">Описание</div>
<div class="t" style="left:693.5px;width:600px;text-align:center;top:407.34px;font-size:12px;color:#262626;">закреплен</div>
<div class="t" style="left:693.5px;width:600px;text-align:center;top:423.34px;font-size:12px;color:#262626;">ия точки</div>
<div class="r" style="left:423px;top:439px;width:35px;height:20px;background:#efefef;"></div>
<div class="r" style="left:459px;top:439px;width:566px;height:20px;background:#fffde3;"></div>
<div class="r" style="left:458px;top:438px;width:1px;height:22px;background:#a9abb3;"></div>
<div class="r" style="left:423px;top:459px;width:602px;height:1px;background:#a9abb3;"></div>
<div class="t" style="left:425.8px;top:443.84px;font-size:12px;color:#262626;">1</div>
<div class="t" style="left:462.9px;top:443.84px;font-size:12px;color:#262626;">1</div>
<div class="t" style="left:525.3px;top:443.84px;font-size:12px;color:#262626;letter-spacing:-0.279px;">586067.57</div>
<div class="t" style="left:609.3px;top:443.84px;font-size:12px;color:#262626;letter-spacing:-0.279px;">496851.47</div>
<div class="t" style="left:695.4px;top:443.84px;font-size:12px;color:#262626;letter-spacing:-0.111px;">Геодезичес...</div>
<div class="t" style="left:777.6px;top:443.84px;font-size:12px;color:#262626;letter-spacing:-0.232px;">Mt=√(0.07²+0.07²)=...</div>
<div class="t" style="left:902.9px;top:443.84px;font-size:12px;color:#262626;">0.10</div>
<div class="t" style="left:693.5px;width:600px;text-align:center;top:443.84px;font-size:12px;color:#262626;">Нет зак...</div>
<div class="r" style="left:423px;top:460px;width:35px;height:20px;background:#efefef;"></div>
<div class="r" style="left:459px;top:460px;width:566px;height:20px;background:#fffde3;"></div>
<div class="r" style="left:458px;top:459px;width:1px;height:22px;background:#a9abb3;"></div>
<div class="r" style="left:423px;top:480px;width:602px;height:1px;background:#a9abb3;"></div>
<div class="t" style="left:425.8px;top:464.84px;font-size:12px;color:#262626;">2</div>
<div class="t" style="left:462.9px;top:464.84px;font-size:12px;color:#262626;">2</div>
<div class="t" style="left:525.3px;top:464.84px;font-size:12px;color:#262626;letter-spacing:-0.279px;">586069.61</div>
<div class="t" style="left:609.3px;top:464.84px;font-size:12px;color:#262626;letter-spacing:-0.279px;">496851.01</div>
<div class="t" style="left:695.4px;top:464.84px;font-size:12px;color:#262626;letter-spacing:-0.111px;">Геодезичес...</div>
<div class="t" style="left:777.6px;top:464.84px;font-size:12px;color:#262626;letter-spacing:-0.232px;">Mt=√(0.07²+0.07²)=...</div>
<div class="t" style="left:902.9px;top:464.84px;font-size:12px;color:#262626;">0.10</div>
<div class="t" style="left:693.5px;width:600px;text-align:center;top:464.84px;font-size:12px;color:#262626;">Нет зак...</div>
<div class="r" style="left:423px;top:481px;width:35px;height:20px;background:#efefef;"></div>
<div class="r" style="left:459px;top:481px;width:566px;height:20px;background:#fffde3;"></div>
<div class="r" style="left:458px;top:480px;width:1px;height:22px;background:#a9abb3;"></div>
<div class="r" style="left:423px;top:501px;width:602px;height:1px;background:#a9abb3;"></div>
<div class="t" style="left:425.8px;top:485.84px;font-size:12px;color:#262626;">3</div>
<div class="t" style="left:462.9px;top:485.84px;font-size:12px;color:#262626;">3</div>
<div class="t" style="left:525.3px;top:485.84px;font-size:12px;color:#262626;letter-spacing:-0.279px;">586067.57</div>
<div class="t" style="left:609.3px;top:485.84px;font-size:12px;color:#262626;letter-spacing:-0.279px;">496851.47</div>
<div class="t" style="left:695.4px;top:485.84px;font-size:12px;color:#262626;letter-spacing:-0.111px;">Геодезичес...</div>
<div class="t" style="left:777.6px;top:485.84px;font-size:12px;color:#262626;letter-spacing:-0.232px;">Mt=√(0.07²+0.07²)=...</div>
<div class="t" style="left:902.9px;top:485.84px;font-size:12px;color:#262626;">0.10</div>
<div class="t" style="left:693.5px;width:600px;text-align:center;top:485.84px;font-size:12px;color:#262626;">Нет зак...</div>
<div class="r" style="left:423px;top:502px;width:35px;height:20px;background:#efefef;"></div>
<div class="r" style="left:459px;top:502px;width:566px;height:20px;background:#fffde3;"></div>
<div class="r" style="left:458px;top:501px;width:1px;height:22px;background:#a9abb3;"></div>
<div class="r" style="left:423px;top:522px;width:602px;height:1px;background:#a9abb3;"></div>
<div class="t" style="left:425.8px;top:506.84px;font-size:12px;color:#262626;">4</div>
<div class="t" style="left:462.9px;top:506.84px;font-size:12px;color:#262626;">4</div>
<div class="t" style="left:525.3px;top:506.84px;font-size:12px;color:#262626;letter-spacing:-0.279px;">586068.32</div>
<div class="t" style="left:609.3px;top:506.84px;font-size:12px;color:#262626;letter-spacing:-0.279px;">496846.78</div>
<div class="t" style="left:695.4px;top:506.84px;font-size:12px;color:#262626;letter-spacing:-0.111px;">Геодезичес...</div>
<div class="t" style="left:777.6px;top:506.84px;font-size:12px;color:#262626;letter-spacing:-0.232px;">Mt=√(0.07²+0.07²)=...</div>
<div class="t" style="left:902.9px;top:506.84px;font-size:12px;color:#262626;">0.10</div>
<div class="t" style="left:693.5px;width:600px;text-align:center;top:506.84px;font-size:12px;color:#262626;">Нет зак...</div>
<div class="r" style="left:423px;top:523px;width:35px;height:20px;background:#efefef;"></div>
<div class="r" style="left:459px;top:523px;width:566px;height:20px;background:#fffde3;"></div>
<div class="r" style="left:458px;top:522px;width:1px;height:22px;background:#a9abb3;"></div>
<div class="r" style="left:423px;top:543px;width:602px;height:1px;background:#a9abb3;"></div>
<div class="t" style="left:425.8px;top:527.84px;font-size:12px;color:#262626;">5</div>
<div class="t" style="left:462.9px;top:527.84px;font-size:12px;color:#262626;">1</div>
<div class="t" style="left:525.3px;top:527.84px;font-size:12px;color:#262626;letter-spacing:-0.279px;">586067.57</div>
<div class="t" style="left:609.3px;top:527.84px;font-size:12px;color:#262626;letter-spacing:-0.279px;">496851.47</div>
<div class="t" style="left:695.4px;top:527.84px;font-size:12px;color:#262626;letter-spacing:-0.111px;">Геодезичес...</div>
<div class="t" style="left:777.6px;top:527.84px;font-size:12px;color:#262626;letter-spacing:-0.232px;">Mt=√(0.07²+0.07²)=...</div>
<div class="t" style="left:902.9px;top:527.84px;font-size:12px;color:#262626;">0.10</div>
<div class="t" style="left:693.5px;width:600px;text-align:center;top:527.84px;font-size:12px;color:#262626;">Нет зак...</div>
<div class="r" style="left:458px;top:439px;width:1px;height:105px;background:#a9abb3;"></div>
<div class="r" style="left:521px;top:386px;width:1px;height:158px;background:#a9abb3;"></div>
<div class="r" style="left:605px;top:386px;width:1px;height:158px;background:#a9abb3;"></div>
<div class="r" style="left:689px;top:386px;width:1px;height:158px;background:#a9abb3;"></div>
<div class="r" style="left:773px;top:386px;width:1px;height:158px;background:#a9abb3;"></div>
<div class="r" style="left:899px;top:386px;width:1px;height:158px;background:#a9abb3;"></div>
<div class="r" style="left:962px;top:386px;width:1px;height:158px;background:#a9abb3;"></div>
<div class="r" style="left:1025px;top:386px;width:1px;height:158px;background:#a9abb3;"></div>
<div class="r" style="left:1025px;top:386px;width:1px;height:158px;background:#a9abb3;"></div>
<svg class="r" style="left:1031px;top:444px;" width="9" height="9" viewBox="0 0 9 9"><path d="M4.5 0L9 9H0z" fill="#d6d6d6"/></svg>
<svg class="r" style="left:1031px;top:536px;" width="9" height="8" viewBox="0 0 9 8"><path d="M0 0h9L4.5 8z" fill="#d6d6d6"/></svg>
<div class="r" style="left:42px;top:550px;width:1003px;height:3px;background:#efefef;"></div>
<div class="t" style="left:42.6px;top:569.24px;font-size:12px;color:#1a1a1a;font-weight:700;letter-spacing:-0.039px;">2. Сведения о характерных точках границ</div>
<div class="t" style="left:42.6px;top:585.24px;font-size:12px;color:#1a1a1a;font-weight:700;letter-spacing:-0.073px;">уточняемой части земельного участка</div>
<div class="r" style="left:358px;top:553px;width:5px;height:50px;background:#e8e8e8;"></div>
<div class="r" style="left:368px;top:570px;width:677px;height:1px;background:#a8a8a8;"></div>
<div class="r" style="left:42px;top:613px;width:1003px;height:25px;background:#ebebeb;"></div>
<svg class="r" style="left:50px;top:617px;" width="16" height="16" viewBox="0 0 16 16"><path d="M1 0.5h4M7 0.5h8" stroke="#3c3c3c" stroke-width="1"/><path d="M7 3.5h5M9 5.5h6M9 8.5h6M9 10.5h6M9 13.5h6M9 15.5h6" stroke="#3c3c3c" stroke-width="1"/><path d="M7 5.5h1M7 8.5h1M7 10.5h1M7 13.5h1M7 15.5h1" stroke="#3c3c3c" stroke-width="1"/><path d="M3 3v10" stroke="#3d9c6e" stroke-width="1.6" opacity=".75"/><path d="M0 12h6l-3 4z" fill="#3d9c6e"/></svg>
<svg class="r" style="left:74px;top:617px;" width="16" height="16" viewBox="0 0 16 16"><path d="M1 0.5h4M7 0.5h8M7 2.5h8M7 4.5h8" stroke="#3c3c3c" stroke-width="1"/><path d="M3 6v10" stroke="#3d9c6e" stroke-width="1.6" opacity=".75"/><path d="M0 7h6l-3-4z" fill="#3d9c6e"/></svg>
<div class="r" style="left:97px;top:616px;width:1px;height:18px;background:#b9c0c9;"></div>
<svg class="r" style="left:104px;top:617px;" width="16" height="16" viewBox="0 0 16 16"><path d="M1.5 1.6Q1.5 3.2 3.1 3.2Q1.5 3.2 1.5 4.800000000000001Q1.5 3.2 -0.10000000000000009 3.2Q1.5 3.2 1.5 1.6z" fill="#3d9c6e"/><path d="M6 -0.3999999999999999Q6 2 8.4 2Q6 2 6 4.4Q6 2 3.6 2Q6 2 6 -0.3999999999999999z" fill="#3d9c6e"/><path d="M2.8 5.199999999999999Q2.8 6.8 4.4 6.8Q2.8 6.8 2.8 8.4Q2.8 6.8 1.1999999999999997 6.8Q2.8 6.8 2.8 5.199999999999999z" fill="#3d9c6e"/><path d="M8.6 8.2L13.6 15.2" stroke="#3c3c3c" stroke-width="3.2"/><path d="M7 6L8 7.4" stroke="#3c3c3c" stroke-width="3.2"/></svg>
<svg class="r" style="left:126px;top:617px;" width="16" height="16" viewBox="0 0 16 16"><path d="M1.5 1.6Q1.5 3.2 3.1 3.2Q1.5 3.2 1.5 4.800000000000001Q1.5 3.2 -0.10000000000000009 3.2Q1.5 3.2 1.5 1.6z" fill="#3d9c6e"/><path d="M6 -0.3999999999999999Q6 2 8.4 2Q6 2 6 4.4Q6 2 3.6 2Q6 2 6 -0.3999999999999999z" fill="#3d9c6e"/><path d="M2.8 5.199999999999999Q2.8 6.8 4.4 6.8Q2.8 6.8 2.8 8.4Q2.8 6.8 1.1999999999999997 6.8Q2.8 6.8 2.8 5.199999999999999z" fill="#3d9c6e"/><path d="M8.6 8.2L13.6 15.2" stroke="#3c3c3c" stroke-width="3.2"/><path d="M7 6L8 7.4" stroke="#3c3c3c" stroke-width="3.2"/><path d="M1 8.5h6M1.5 8v7.5h8" fill="none" stroke="#3d9c6e" stroke-width="2"/></svg>
<svg class="r" style="left:152px;top:617px;" width="16" height="16" viewBox="0 0 16 16"><path d="M1.5 1.6Q1.5 3.2 3.1 3.2Q1.5 3.2 1.5 4.800000000000001Q1.5 3.2 -0.10000000000000009 3.2Q1.5 3.2 1.5 1.6z" fill="#3d9c6e"/><path d="M6 -0.3999999999999999Q6 2 8.4 2Q6 2 6 4.4Q6 2 3.6 2Q6 2 6 -0.3999999999999999z" fill="#3d9c6e"/><path d="M2.8 5.199999999999999Q2.8 6.8 4.4 6.8Q2.8 6.8 2.8 8.4Q2.8 6.8 1.1999999999999997 6.8Q2.8 6.8 2.8 5.199999999999999z" fill="#3d9c6e"/><path d="M8.6 8.2L13.6 15.2" stroke="#3c3c3c" stroke-width="3.2"/><path d="M7 6L8 7.4" stroke="#3c3c3c" stroke-width="3.2"/><path d="M0 11v4.5M3 11v4.5M0 13.2h3M5 12l1.5-1v4.5" fill="none" stroke="#3d9c6e" stroke-width="1.1"/></svg>
<svg class="r" style="left:175px;top:617px;" width="16" height="16" viewBox="0 0 16 16"><path d="M8 0.7L15.3 6 12.5 15.3H3.5L0.7 6z" fill="none" stroke="#3c3c3c" stroke-width="1"/><rect x="4.5" y="5.5" width="7" height="7" fill="none" stroke="#3d9c6e" stroke-width="1.6"/><path d="M4.5 5.5h1M10.5 5.5h1M4.5 12.5h1M10.5 12.5h1" stroke="#3d9c6e" stroke-width="2.2"/></svg>
<div class="r" style="left:198px;top:616px;width:1px;height:18px;background:#b9c0c9;"></div>
<svg class="r" style="left:204px;top:617px;" width="16" height="16" viewBox="0 0 16 16"><rect x="0.5" y="0.5" width="8" height="7.5" fill="none" stroke="#3c3c3c" stroke-width="1.1"/><rect x="0" y="0" width="9" height="2.6" fill="#3c3c3c"/><rect x="7.5" y="7.5" width="8" height="8" fill="#ebebeb" stroke="#3c3c3c" stroke-width="1.1"/><rect x="7" y="7" width="9" height="2.6" fill="#3c3c3c"/><path d="M1.5 9.5c0 3 1.5 4 4.5 4" fill="none" stroke="#3d9c6e" stroke-width="1.5"/><path d="M5 11.3l2.2 2.2-2.2 2.2" fill="none" stroke="#3d9c6e" stroke-width="1.4"/></svg>
<svg class="r" style="left:228px;top:617px;" width="16" height="16" viewBox="0 0 16 16"><rect x="4.5" y="0.5" width="9" height="8" fill="none" stroke="#3c3c3c" stroke-width="1.1"/><rect x="4" y="0" width="10" height="2.6" fill="#3c3c3c"/><path d="M1.5 5.5h6" stroke="#3d9c6e" stroke-width="2.2"/><path d="M3.6 2.8L0.4 5.5 3.6 8.2z" fill="#3d9c6e"/><path d="M5 11l3.5 5M8.5 11L5 16M9.5 11l2 2.5 2-2.5M11.5 13.5v2.5" fill="none" stroke="#3d9c6e" stroke-width="1.2"/></svg>
<svg class="r" style="left:246px;top:623px;" width="5" height="3" viewBox="0 0 5 3"><path d="M0 0h5l-2.5 3z" fill="#111"/></svg>
<svg class="r" style="left:258px;top:617px;" width="16" height="16" viewBox="0 0 16 16"><rect x="4.5" y="0.5" width="9" height="8" fill="none" stroke="#3c3c3c" stroke-width="1.1"/><rect x="4" y="0" width="10" height="2.6" fill="#3c3c3c"/><path d="M0 5.5h5.5" stroke="#c5502a" stroke-width="2.2"/><path d="M4.8 2.8l3.2 2.7-3.2 2.7z" fill="#c5502a"/><path d="M5 11l3.5 5M8.5 11L5 16M9.5 11l2 2.5 2-2.5M11.5 13.5v2.5" fill="none" stroke="#c5502a" stroke-width="1.2"/></svg>
<svg class="r" style="left:277px;top:623px;" width="5" height="3" viewBox="0 0 5 3"><path d="M0 0h5l-2.5 3z" fill="#111"/></svg>
<svg class="r" style="left:290px;top:617px;" width="16" height="16" viewBox="0 0 16 16"><path d="M2 2.5 L13.2 1.2 L14.8 9.8 L9.8 14.5 L1 14.5z" fill="none" stroke="#3c3c3c" stroke-width="1.1"/><circle cx="2" cy="2.5" r="1.45" fill="#3c3c3c"/><circle cx="13.2" cy="1.2" r="1.45" fill="#3c3c3c"/><circle cx="14.8" cy="9.8" r="1.45" fill="#3c3c3c"/><circle cx="9.8" cy="14.5" r="1.45" fill="#3c3c3c"/><circle cx="1" cy="14.5" r="1.45" fill="#3c3c3c"/><path d="M4.5 9.5c0.5-2.5 2-3.6 3.8-3.6s3.3 1.4 3.5 3.4" fill="none" stroke="#3d9c6e" stroke-width="1.7"/><path d="M2.5 9h4.2l-2.4 2.8z" fill="#3d9c6e"/></svg>
<svg class="r" style="left:308px;top:623px;" width="4.5" height="3" viewBox="0 0 4.5 3"><path d="M0 0h4.5l-2.25 3z" fill="#111"/></svg>
<svg class="r" style="left:320px;top:617px;" width="17" height="16" viewBox="0 0 17 16"><path d="M2 3.5V14.5H13" fill="none" stroke="#3c3c3c" stroke-width="1.1"/><path d="M0.4 5L2 2.5 3.6 5z" fill="#3c3c3c"/><path d="M12.5 13l2.6 1.5-2.6 1.5z" fill="#3c3c3c"/><rect x="0.6" y="13" width="2.8" height="2.8" fill="#3c3c3c"/><circle cx="9" cy="8.5" r="4" fill="#6db592"/><path d="M5.2 8.5h7.6M9 4.6v7.8" stroke="#9fd0b5" stroke-width=".6"/><path d="M6.2 0.2l2.6 2.6M8.8 0.2L6.2 2.8" stroke="#3c3c3c" stroke-width=".9"/><path d="M13.2 6.8l1.4 2.4 1.4-2.4M14.6 9.2l-1 2.6" fill="none" stroke="#777" stroke-width=".9"/></svg>
<svg class="r" style="left:339.5px;top:623px;" width="4.5" height="3" viewBox="0 0 4.5 3"><path d="M0 0h4.5l-2.25 3z" fill="#111"/></svg>
<svg class="r" style="left:352px;top:617px;" width="16" height="16" viewBox="0 0 16 16"><rect x="0.5" y="0.5" width="10" height="10" fill="none" stroke="#3c3c3c"/><rect x="5.5" y="5.5" width="10" height="10" fill="none" stroke="#c5502a" stroke-width="1.2"/></svg>
<div class="r" style="left:375px;top:616px;width:1px;height:18px;background:#b9c0c9;"></div>
<svg class="r" style="left:381px;top:617px;" width="16" height="16" viewBox="0 0 16 16"><path d="M0.5 0.5h6l3 3v7h-9z" fill="none" stroke="#3c3c3c"/><path d="M6.5 0.5v3h3" fill="none" stroke="#3c3c3c"/><circle cx="9.5" cy="10" r="3" fill="#ebebeb" stroke="#3d9c6e" stroke-width="1.6"/><path d="M11.6 12.2l3.6 3.4" stroke="#3d9c6e" stroke-width="1.8"/></svg>
<div class="r" style="left:404px;top:616px;width:1px;height:18px;background:#b9c0c9;"></div>
<svg class="r" style="left:413px;top:620px;" width="10" height="10" viewBox="0 0 10 10"><path d="M1 1L9 9M9 1L1 9" stroke="#3c3c3c" stroke-width="1.9"/></svg>
<svg class="r" style="left:454px;top:617px;" width="16" height="16" viewBox="0 0 16 16"><rect x="0.65" y="0.65" width="14.7" height="14.7" fill="none" stroke="#3c3c3c" stroke-width="1.3"/><rect x="0" y="0" width="16" height="3" fill="#3c3c3c"/><path d="M8 1v14" stroke="#3c3c3c" stroke-width="1.3"/><path d="M1 6.8h14M1 10.6h14" stroke="#8a8a8a" stroke-width="1.4"/></svg>
<div class="r" style="left:477px;top:616px;width:1px;height:18px;background:#b9c0c9;"></div>
<svg class="r" style="left:483px;top:617px;" width="16" height="16" viewBox="0 0 16 16"><rect x="0.5" y="1.5" width="6.5" height="4" fill="none" stroke="#9a9a9a" stroke-width="1.1"/><rect x="0" y="1" width="7.5" height="1.6" fill="#9a9a9a"/><rect x="6.5" y="6.5" width="6" height="3" fill="none" stroke="#9a9a9a" stroke-width="1.1"/><rect x="6" y="6" width="7" height="1.6" fill="#9a9a9a"/><rect x="0.5" y="10.5" width="6.5" height="3.5" fill="none" stroke="#9a9a9a" stroke-width="1.1"/><rect x="0" y="10" width="7.5" height="1.6" fill="#9a9a9a"/><path d="M12.5 10v6M9.5 13h6" stroke="#8fc7aa" stroke-width="1.5"/></svg>
<svg class="r" style="left:507px;top:617px;" width="16" height="16" viewBox="0 0 16 16"><rect x="0.5" y="1.5" width="6.5" height="4" fill="none" stroke="#9a9a9a" stroke-width="1.1"/><rect x="0" y="1" width="7.5" height="1.6" fill="#9a9a9a"/><rect x="6.5" y="6.5" width="6" height="3" fill="none" stroke="#9a9a9a" stroke-width="1.1"/><rect x="6" y="6" width="7" height="1.6" fill="#9a9a9a"/><rect x="0.5" y="10.5" width="6.5" height="3.5" fill="none" stroke="#9a9a9a" stroke-width="1.1"/><rect x="0" y="10" width="7.5" height="1.6" fill="#9a9a9a"/><path d="M12.5 0v6M9.5 3h6" stroke="#8fc7aa" stroke-width="1.5"/></svg>
<svg class="r" style="left:531px;top:617px;" width="16" height="16" viewBox="0 0 16 16"><rect x="0.5" y="1.5" width="6.5" height="4" fill="none" stroke="#9a9a9a" stroke-width="1.1"/><rect x="0" y="1" width="7.5" height="1.6" fill="#9a9a9a"/><rect x="6.5" y="6.5" width="6" height="3" fill="none" stroke="#9a9a9a" stroke-width="1.1"/><rect x="6" y="6" width="7" height="1.6" fill="#9a9a9a"/><rect x="0.5" y="10.5" width="6.5" height="3.5" fill="none" stroke="#9a9a9a" stroke-width="1.1"/><rect x="0" y="10" width="7.5" height="1.6" fill="#9a9a9a"/><path d="M10.5 0.5l4 4M14.5 0.5l-4 4" stroke="#e0a08c" stroke-width="1.3"/></svg>
<div class="r" style="left:554px;top:616px;width:1px;height:18px;background:#b9c0c9;"></div>
<svg class="r" style="left:560px;top:617px;" width="16" height="16" viewBox="0 0 16 16"><rect x="0.5" y="1.5" width="6" height="4" fill="none" stroke="#9a9a9a" stroke-width="1.1"/><rect x="0" y="1" width="7" height="1.6" fill="#9a9a9a"/><rect x="0.5" y="10.5" width="6" height="3.5" fill="none" stroke="#9a9a9a" stroke-width="1.1"/><rect x="0" y="10" width="7" height="1.6" fill="#9a9a9a"/><path d="M6.5 5.5h6.5" stroke="#9a9a9a" stroke-width="1"/><path d="M10.5 7v5" stroke="#8fc7aa" stroke-width="2.4"/><path d="M8.1 11.5h4.8L10.5 15z" fill="#8fc7aa"/></svg>
<svg class="r" style="left:585px;top:617px;" width="16" height="16" viewBox="0 0 16 16"><rect x="0.5" y="1.5" width="6" height="4" fill="none" stroke="#9a9a9a" stroke-width="1.1"/><rect x="0" y="1" width="7" height="1.6" fill="#9a9a9a"/><rect x="0.5" y="10.5" width="6" height="3.5" fill="none" stroke="#9a9a9a" stroke-width="1.1"/><rect x="0" y="10" width="7" height="1.6" fill="#9a9a9a"/><path d="M6.5 9.5h6.5" stroke="#9a9a9a" stroke-width="1"/><path d="M10.5 3.5v5.5" stroke="#8fc7aa" stroke-width="2.4"/><path d="M8.1 4h4.8L10.5 0.5z" fill="#8fc7aa"/></svg>
<div class="r" style="left:607px;top:616px;width:1px;height:18px;background:#b9c0c9;"></div>
<svg class="r" style="left:612px;top:617px;" width="17" height="16" viewBox="0 0 17 16"><path d="M0.5 4V0.5H4M13 0.5h3.5V4M16.5 12v3.5H13M4 15.5H0.5V12" fill="none" stroke="#3c3c3c" stroke-width="1"/><rect x="3.5" y="3.5" width="10" height="9" fill="none" stroke="#3d9c6e" stroke-width="1.6"/></svg>
<div class="r" style="left:42px;top:638px;width:402px;height:80px;background:#fff;border:1px solid #a9abb3;box-sizing:border-box;"></div>
<div class="r" style="left:444px;top:638px;width:2px;height:80px;background:#ebebeb;"></div>
<div class="t" style="left:55px;top:647.84px;font-size:12px;color:#2a9d63;">+</div>
<svg class="r" style="left:65px;top:646px;" width="14" height="14" viewBox="0 0 14 14"><rect x="0.75" y="0.75" width="12.5" height="12.5" fill="none" stroke="#6db592" stroke-width="1.5"/><rect x="1.5" y="7" width="5" height="5.5" fill="#2f7d55"/></svg>
<div class="t" style="left:82.5px;top:647.84px;font-size:12px;color:#2a9d63;">Часть</div>
<div class="r" style="left:446px;top:638px;width:599px;height:80px;background:#f0f0f0;border:1px solid #a9abb3;box-sizing:border-box;"></div>
<div class="r" style="left:447px;top:639px;width:578px;height:52px;background:#efefef;"></div>
<div class="r" style="left:494px;top:639px;width:1px;height:52px;background:#a9abb3;"></div>
<div class="r" style="left:528px;top:639px;width:1px;height:52px;background:#a9abb3;"></div>
<div class="r" style="left:586px;top:639px;width:1px;height:52px;background:#a9abb3;"></div>
<div class="r" style="left:644px;top:639px;width:1px;height:52px;background:#a9abb3;"></div>
<div class="r" style="left:702px;top:639px;width:1px;height:52px;background:#a9abb3;"></div>
<div class="r" style="left:760px;top:639px;width:1px;height:52px;background:#a9abb3;"></div>
<div class="r" style="left:832px;top:639px;width:1px;height:52px;background:#a9abb3;"></div>
<div class="r" style="left:928px;top:639px;width:1px;height:52px;background:#a9abb3;"></div>
<div class="r" style="left:967px;top:639px;width:1px;height:52px;background:#a9abb3;"></div>
<div class="r" style="left:1025px;top:639px;width:1px;height:52px;background:#a9abb3;"></div>
<div class="r" style="left:447px;top:691px;width:579px;height:1px;background:#a9abb3;"></div>
<div class="t" style="left:170.0px;width:600px;text-align:center;top:644.34px;font-size:12px;color:#262626;">!</div>
<div class="t" style="left:170.0px;width:600px;text-align:center;top:660.34px;font-size:12px;color:#262626;">Обозна</div>
<div class="t" style="left:170.0px;width:600px;text-align:center;top:676.34px;font-size:12px;color:#262626;">чени...</div>
<div class="t" style="left:211.0px;width:600px;text-align:center;top:644.34px;font-size:12px;color:#262626;">Обоз</div>
<div class="t" style="left:211.0px;width:600px;text-align:center;top:660.34px;font-size:12px;color:#262626;">наче</div>
<div class="t" style="left:211.0px;width:600px;text-align:center;top:676.34px;font-size:12px;color:#262626;">ни...</div>
<div class="t" style="left:257.0px;width:600px;text-align:center;top:660.34px;font-size:12px;color:#262626;">X сущ, м</div>
<div class="t" style="left:315.0px;width:600px;text-align:center;top:660.34px;font-size:12px;color:#262626;">Y сущ, м</div>
<div class="t" style="left:373.0px;width:600px;text-align:center;top:660.34px;font-size:12px;color:#262626;">X уточ, м</div>
<div class="t" style="left:431.0px;width:600px;text-align:center;top:660.34px;font-size:12px;color:#262626;">Y уточ, м</div>
<div class="t" style="left:496.0px;width:600px;text-align:center;top:644.34px;font-size:12px;color:#262626;">Метод</div>
<div class="t" style="left:496.0px;width:600px;text-align:center;top:660.34px;font-size:12px;color:#262626;">определени</div>
<div class="t" style="left:496.0px;width:600px;text-align:center;top:676.34px;font-size:12px;color:#262626;">я...</div>
<div class="t" style="left:580.0px;width:600px;text-align:center;top:644.34px;font-size:12px;color:#262626;">Формулы,</div>
<div class="t" style="left:580.0px;width:600px;text-align:center;top:660.34px;font-size:12px;color:#262626;">примененные</div>
<div class="t" style="left:580.0px;width:600px;text-align:center;top:676.34px;font-size:12px;color:#262626;">для расчета...</div>
<div class="t" style="left:647.5px;width:600px;text-align:center;top:644.34px;font-size:12px;color:#262626;">Сред</div>
<div class="t" style="left:647.5px;width:600px;text-align:center;top:660.34px;font-size:12px;color:#262626;">няя</div>
<div class="t" style="left:647.5px;width:600px;text-align:center;top:676.34px;font-size:12px;color:#262626;">ква...</div>
<div class="t" style="left:696.0px;width:600px;text-align:center;top:644.34px;font-size:12px;color:#262626;">Описани</div>
<div class="t" style="left:696.0px;width:600px;text-align:center;top:660.34px;font-size:12px;color:#262626;">е</div>
<div class="t" style="left:696.0px;width:600px;text-align:center;top:676.34px;font-size:12px;color:#262626;">закреп...</div>
<svg class="r" style="left:1031px;top:697px;" width="9" height="9" viewBox="0 0 9 9"><path d="M4.5 0L9 9H0z" fill="#d6d6d6"/></svg>
</div></div>
<div class="r" style="left:0px;top:711px;width:1100px;height:5px;background:#e9e9e9;"></div>
<div class="r" style="left:0px;top:716px;width:1100px;height:24px;background:#21a366;"></div>
<div class="r" style="left:0px;top:740px;width:1100px;height:1px;background:#c8c8c8;"></div>
<div class="t" style="left:8.6px;top:722.84px;font-size:12px;color:#fff;letter-spacing:-0.151px;">Вставка ячеек выполнена.</div>
<div class="r" style="left:0px;top:0px;width:1px;height:741px;background:#bdbdbd;"></div>
<div class="r" style="left:1099px;top:0px;width:1px;height:741px;background:#bdbdbd;"></div>
</body></html>
